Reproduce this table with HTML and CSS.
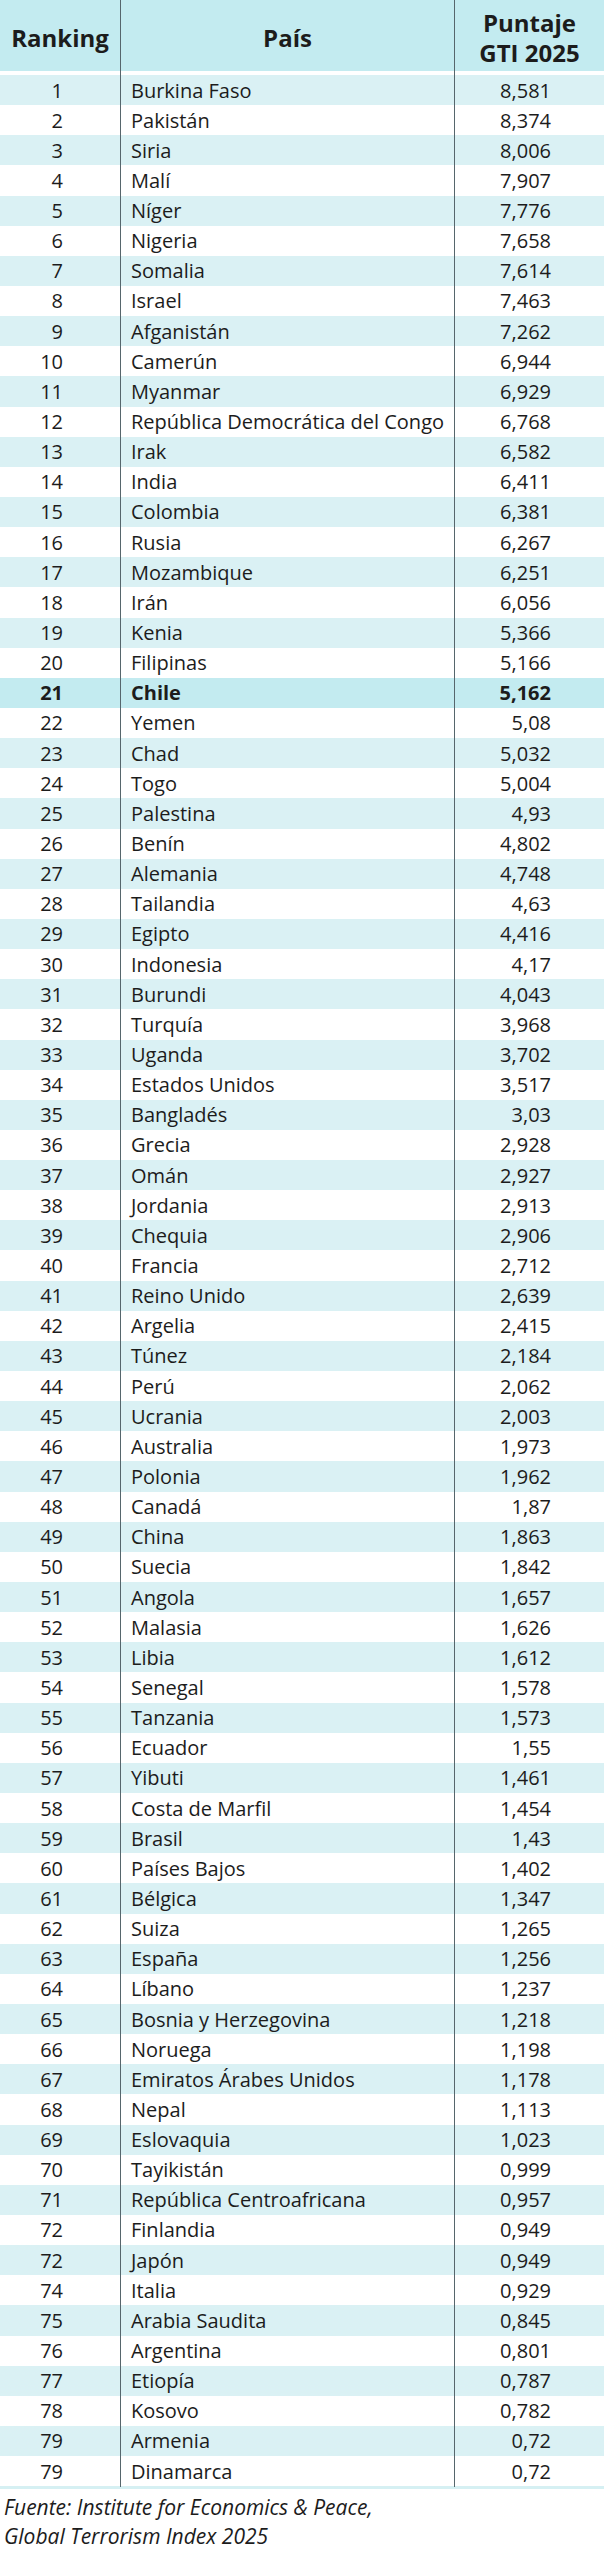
FILE: index.html
```html
<!DOCTYPE html>
<html lang="es">
<head>
<meta charset="utf-8">
<title>Ranking GTI 2025</title>
<link rel="stylesheet" href="styles.css">
</head>
<body>
<div class="table">
  <div class="row head">
    <div class="c rank"><span>Ranking</span></div>
    <div class="c country"><span>País</span></div>
    <div class="c score"><span>Puntaje<br>GTI 2025</span></div>
  </div>
  <div class="body">
    <div class="row"><div class="c rank">1</div><div class="c country">Burkina Faso</div><div class="c score">8,581</div></div>
    <div class="row"><div class="c rank">2</div><div class="c country">Pakistán</div><div class="c score">8,374</div></div>
    <div class="row"><div class="c rank">3</div><div class="c country">Siria</div><div class="c score">8,006</div></div>
    <div class="row"><div class="c rank">4</div><div class="c country">Malí</div><div class="c score">7,907</div></div>
    <div class="row"><div class="c rank">5</div><div class="c country">Níger</div><div class="c score">7,776</div></div>
    <div class="row"><div class="c rank">6</div><div class="c country">Nigeria</div><div class="c score">7,658</div></div>
    <div class="row"><div class="c rank">7</div><div class="c country">Somalia</div><div class="c score">7,614</div></div>
    <div class="row"><div class="c rank">8</div><div class="c country">Israel</div><div class="c score">7,463</div></div>
    <div class="row"><div class="c rank">9</div><div class="c country">Afganistán</div><div class="c score">7,262</div></div>
    <div class="row"><div class="c rank">10</div><div class="c country">Camerún</div><div class="c score">6,944</div></div>
    <div class="row"><div class="c rank">11</div><div class="c country">Myanmar</div><div class="c score">6,929</div></div>
    <div class="row"><div class="c rank">12</div><div class="c country">República Democrática del Congo</div><div class="c score">6,768</div></div>
    <div class="row"><div class="c rank">13</div><div class="c country">Irak</div><div class="c score">6,582</div></div>
    <div class="row"><div class="c rank">14</div><div class="c country">India</div><div class="c score">6,411</div></div>
    <div class="row"><div class="c rank">15</div><div class="c country">Colombia</div><div class="c score">6,381</div></div>
    <div class="row"><div class="c rank">16</div><div class="c country">Rusia</div><div class="c score">6,267</div></div>
    <div class="row"><div class="c rank">17</div><div class="c country">Mozambique</div><div class="c score">6,251</div></div>
    <div class="row"><div class="c rank">18</div><div class="c country">Irán</div><div class="c score">6,056</div></div>
    <div class="row"><div class="c rank">19</div><div class="c country">Kenia</div><div class="c score">5,366</div></div>
    <div class="row"><div class="c rank">20</div><div class="c country">Filipinas</div><div class="c score">5,166</div></div>
    <div class="row hl"><div class="c rank">21</div><div class="c country">Chile</div><div class="c score">5,162</div></div>
    <div class="row"><div class="c rank">22</div><div class="c country">Yemen</div><div class="c score">5,08</div></div>
    <div class="row"><div class="c rank">23</div><div class="c country">Chad</div><div class="c score">5,032</div></div>
    <div class="row"><div class="c rank">24</div><div class="c country">Togo</div><div class="c score">5,004</div></div>
    <div class="row"><div class="c rank">25</div><div class="c country">Palestina</div><div class="c score">4,93</div></div>
    <div class="row"><div class="c rank">26</div><div class="c country">Benín</div><div class="c score">4,802</div></div>
    <div class="row"><div class="c rank">27</div><div class="c country">Alemania</div><div class="c score">4,748</div></div>
    <div class="row"><div class="c rank">28</div><div class="c country">Tailandia</div><div class="c score">4,63</div></div>
    <div class="row"><div class="c rank">29</div><div class="c country">Egipto</div><div class="c score">4,416</div></div>
    <div class="row"><div class="c rank">30</div><div class="c country">Indonesia</div><div class="c score">4,17</div></div>
    <div class="row"><div class="c rank">31</div><div class="c country">Burundi</div><div class="c score">4,043</div></div>
    <div class="row"><div class="c rank">32</div><div class="c country">Turquía</div><div class="c score">3,968</div></div>
    <div class="row"><div class="c rank">33</div><div class="c country">Uganda</div><div class="c score">3,702</div></div>
    <div class="row"><div class="c rank">34</div><div class="c country">Estados Unidos</div><div class="c score">3,517</div></div>
    <div class="row"><div class="c rank">35</div><div class="c country">Bangladés</div><div class="c score">3,03</div></div>
    <div class="row"><div class="c rank">36</div><div class="c country">Grecia</div><div class="c score">2,928</div></div>
    <div class="row"><div class="c rank">37</div><div class="c country">Omán</div><div class="c score">2,927</div></div>
    <div class="row"><div class="c rank">38</div><div class="c country">Jordania</div><div class="c score">2,913</div></div>
    <div class="row"><div class="c rank">39</div><div class="c country">Chequia</div><div class="c score">2,906</div></div>
    <div class="row"><div class="c rank">40</div><div class="c country">Francia</div><div class="c score">2,712</div></div>
    <div class="row"><div class="c rank">41</div><div class="c country">Reino Unido</div><div class="c score">2,639</div></div>
    <div class="row"><div class="c rank">42</div><div class="c country">Argelia</div><div class="c score">2,415</div></div>
    <div class="row"><div class="c rank">43</div><div class="c country">Túnez</div><div class="c score">2,184</div></div>
    <div class="row"><div class="c rank">44</div><div class="c country">Perú</div><div class="c score">2,062</div></div>
    <div class="row"><div class="c rank">45</div><div class="c country">Ucrania</div><div class="c score">2,003</div></div>
    <div class="row"><div class="c rank">46</div><div class="c country">Australia</div><div class="c score">1,973</div></div>
    <div class="row"><div class="c rank">47</div><div class="c country">Polonia</div><div class="c score">1,962</div></div>
    <div class="row"><div class="c rank">48</div><div class="c country">Canadá</div><div class="c score">1,87</div></div>
    <div class="row"><div class="c rank">49</div><div class="c country">China</div><div class="c score">1,863</div></div>
    <div class="row"><div class="c rank">50</div><div class="c country">Suecia</div><div class="c score">1,842</div></div>
    <div class="row"><div class="c rank">51</div><div class="c country">Angola</div><div class="c score">1,657</div></div>
    <div class="row"><div class="c rank">52</div><div class="c country">Malasia</div><div class="c score">1,626</div></div>
    <div class="row"><div class="c rank">53</div><div class="c country">Libia</div><div class="c score">1,612</div></div>
    <div class="row"><div class="c rank">54</div><div class="c country">Senegal</div><div class="c score">1,578</div></div>
    <div class="row"><div class="c rank">55</div><div class="c country">Tanzania</div><div class="c score">1,573</div></div>
    <div class="row"><div class="c rank">56</div><div class="c country">Ecuador</div><div class="c score">1,55</div></div>
    <div class="row"><div class="c rank">57</div><div class="c country">Yibuti</div><div class="c score">1,461</div></div>
    <div class="row"><div class="c rank">58</div><div class="c country">Costa de Marfil</div><div class="c score">1,454</div></div>
    <div class="row"><div class="c rank">59</div><div class="c country">Brasil</div><div class="c score">1,43</div></div>
    <div class="row"><div class="c rank">60</div><div class="c country">Países Bajos</div><div class="c score">1,402</div></div>
    <div class="row"><div class="c rank">61</div><div class="c country">Bélgica</div><div class="c score">1,347</div></div>
    <div class="row"><div class="c rank">62</div><div class="c country">Suiza</div><div class="c score">1,265</div></div>
    <div class="row"><div class="c rank">63</div><div class="c country">España</div><div class="c score">1,256</div></div>
    <div class="row"><div class="c rank">64</div><div class="c country">Líbano</div><div class="c score">1,237</div></div>
    <div class="row"><div class="c rank">65</div><div class="c country">Bosnia y Herzegovina</div><div class="c score">1,218</div></div>
    <div class="row"><div class="c rank">66</div><div class="c country">Noruega</div><div class="c score">1,198</div></div>
    <div class="row"><div class="c rank">67</div><div class="c country">Emiratos Árabes Unidos</div><div class="c score">1,178</div></div>
    <div class="row"><div class="c rank">68</div><div class="c country">Nepal</div><div class="c score">1,113</div></div>
    <div class="row"><div class="c rank">69</div><div class="c country">Eslovaquia</div><div class="c score">1,023</div></div>
    <div class="row"><div class="c rank">70</div><div class="c country">Tayikistán</div><div class="c score">0,999</div></div>
    <div class="row"><div class="c rank">71</div><div class="c country">República Centroafricana</div><div class="c score">0,957</div></div>
    <div class="row"><div class="c rank">72</div><div class="c country">Finlandia</div><div class="c score">0,949</div></div>
    <div class="row"><div class="c rank">72</div><div class="c country">Japón</div><div class="c score">0,949</div></div>
    <div class="row"><div class="c rank">74</div><div class="c country">Italia</div><div class="c score">0,929</div></div>
    <div class="row"><div class="c rank">75</div><div class="c country">Arabia Saudita</div><div class="c score">0,845</div></div>
    <div class="row"><div class="c rank">76</div><div class="c country">Argentina</div><div class="c score">0,801</div></div>
    <div class="row"><div class="c rank">77</div><div class="c country">Etiopía</div><div class="c score">0,787</div></div>
    <div class="row"><div class="c rank">78</div><div class="c country">Kosovo</div><div class="c score">0,782</div></div>
    <div class="row"><div class="c rank">79</div><div class="c country">Armenia</div><div class="c score">0,72</div></div>
    <div class="row"><div class="c rank">79</div><div class="c country">Dinamarca</div><div class="c score">0,72</div></div>
  </div>
  <div class="table-end"></div>
</div>
<p class="source">Fuente: Institute for Economics &amp; Peace,<br>Global Terrorism Index 2025</p>
</body>
</html>
```

FILE: styles.css
```css
html, body {
  margin: 0;
  padding: 0;
  background: #ffffff;
}

body {
  width: 604px;
  font-family: "Open Sans", "Noto Sans", sans-serif;
  color: #1c1c1c;
}

.table {
  width: 604px;
}

.row {
  display: grid;
  grid-template-columns: 120px 334px 150px;
  height: 30.15px;
}

.c {
  box-sizing: border-box;
  font-size: 20px;
  line-height: 30.15px;
  padding-top: 0.5px;
  white-space: nowrap;
}

.country,
.score {
  border-left: 1px solid #56666c;
}

.rank {
  text-align: right;
  padding-right: 57px;
}

.country {
  padding-left: 10px;
}

.score {
  text-align: right;
  padding-right: 53px;
}

.body .row:nth-child(odd) {
  background: #daf1f4;
}

.body .row.hl {
  background: #c3ebf0;
}

.row.hl .c {
  font-weight: 700;
}

.head {
  height: 75px;
}

.head .c {
  display: flex;
  align-items: center;
  justify-content: center;
  height: 75px;
  padding: 4px 0 4px 0;
  font-size: 24px;
  font-weight: 700;
  line-height: 30px;
  text-align: center;
  background: linear-gradient(#c3ebf0 0, #c3ebf0 71px, #ffffff 71px, #ffffff 75px);
}

.head .c span {
  display: block;
}

.table-end {
  height: 3px;
  background: #d6f0f3;
}

.source {
  margin: 4px 0 0 4px;
  font-size: 21px;
  font-style: italic;
  line-height: 29px;
  color: #1c1c1c;
}
```
